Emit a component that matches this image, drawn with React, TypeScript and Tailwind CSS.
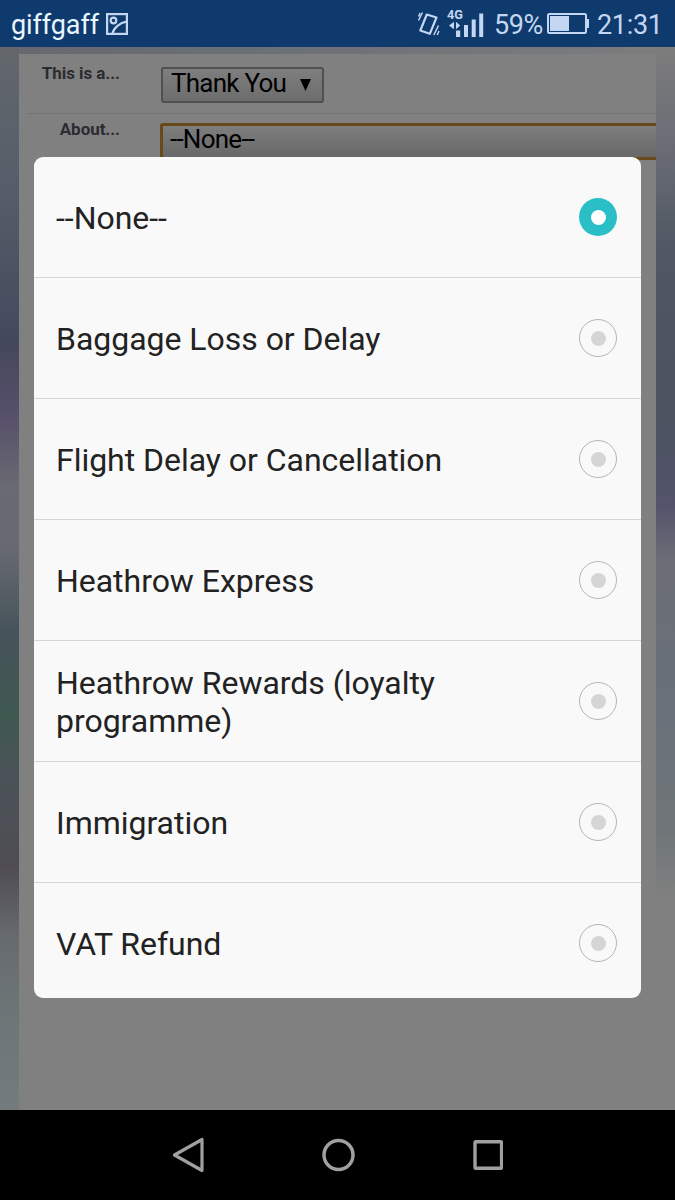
import React, { useState } from 'react';

const OPTIONS = [
  '--None--',
  'Baggage Loss or Delay',
  'Flight Delay or Cancellation',
  'Heathrow Express',
  'Heathrow Rewards (loyalty programme)',
  'Immigration',
  'VAT Refund',
];

const StatusBar: React.FC = () => (
  <header className="flex h-[47px] shrink-0 items-center bg-[#0f3a6d] pl-[11px] pr-[12px] text-[#c3d6f2]">
    <span className="w-[95px] whitespace-nowrap pt-[3px] text-[27px] leading-[44px] tracking-[-0.1px] text-[#e9f6ff]">giffgaff</span>
    <svg className="h-[22px] w-[22px]" viewBox="0 0 22 22" fill="none" stroke="currentColor" strokeWidth="2.2">
      <rect x="1.1" y="1.1" width="19.8" height="19.8" />
      <circle cx="7.5" cy="7.5" r="2.8" />
      <path d="M6.5 20.5C7.5 15 14 9.5 20.5 8.7" />
    </svg>
    <div className="ml-auto flex items-center">
      {/* vibrate */}
      <svg className="h-[26px] w-[22px]" viewBox="0 0 22 26" fill="none" stroke="currentColor">
        <path d="M8.8 3.5L18.5 6.5L11.8 22.8L2.3 19.5Z" strokeWidth="2.2" strokeLinejoin="round" />
        <path d="M0.5 9.5L4.5 1.5M0.5 5.5L2.2 2M15.8 24L20.5 14.5M19.2 24L21 20" strokeWidth="1.5" />
      </svg>
      {/* 4G signal */}
      <svg className="ml-[6px] h-[34px] w-[39px]" viewBox="-1 -3 39 34" fill="currentColor">
        <text x="0" y="9.3" fontSize="12.5" fontWeight="700" textLength="16" lengthAdjust="spacingAndGlyphs">4G</text>
        <path d="M2 15.5L7 11.8V19.2ZM13.2 15.5L9 11.8V19.2Z" />
        <rect x="9" y="20.5" width="4.2" height="6.5" />
        <rect x="17" y="15" width="4" height="12" />
        <rect x="24.7" y="9.5" width="4" height="17.5" />
        <rect x="32.2" y="3.5" width="4" height="23.5" />
      </svg>
      <span className="ml-[9px] w-[53px] whitespace-nowrap pt-[4px] text-[27px] tracking-[-0.4px]">59%</span>
      <svg className="h-[22px] w-[42px]" viewBox="0 0 42 22" fill="none" stroke="currentColor">
        <rect x="1" y="1" width="38" height="19" rx="1.5" strokeWidth="2" />
        <rect x="3" y="3" width="19" height="15" fill="currentColor" stroke="none" />
        <path d="M41 6V15" strokeWidth="2.4" />
      </svg>
      <span className="ml-[8px] w-[66px] whitespace-nowrap pt-[4px] text-[27px] tracking-[-0.3px]">21:31</span>
    </div>
  </header>
);

const FeedbackForm: React.FC = () => (
  <div className="flex h-full bg-[linear-gradient(90deg,#65696e,#6b7077_40%,#7d7d7d)] text-[#2b2b30]">
    <div className="w-[19px] bg-[linear-gradient(180deg,#63676c_0px,#555e69_140px,#44485c_296px,#56506a_368px,#6a6a72_441px,#666a70_503px,#46535a_585px,#3f5850_671px,#4a5458_723px,#4f4c54_819px,#666a6e_888px,#6c7476_957px,#737b7e_1063px)]" />
    <div className="mt-[7px] w-[637px] overflow-hidden bg-[#808080]">
      <div className="ml-2 flex h-[60px] border-b border-[#757575]">
        <div className="w-[93px] shrink-0 pt-[8px] text-right text-[17px] font-bold leading-[22px] tracking-[-0.05px]">This is a...</div>
        <div className="ml-[41px] mt-[13px] flex h-[36px] w-[163px] items-center rounded-[3px] border-2 border-[#505050] bg-linear-to-b from-[#7e7e7e] to-[#6d6d6d] pl-[8px] text-[26px] tracking-[-0.75px] text-black">
          <span className="-mt-[4px] w-[115px] shrink-0 whitespace-nowrap">Thank You</span>
          <svg className="ml-[14px] h-[12px] w-[11px] shrink-0" viewBox="0 0 11 12">
            <path d="M0 0H11L5.5 12Z" />
          </svg>
        </div>
      </div>
      <div className="ml-2 flex h-[50px]">
        <div className="w-[93px] shrink-0 pt-[4px] text-right text-[17px] font-bold leading-[22px] tracking-[-0.05px]">About...</div>
        <div className="ml-[40px] mt-[9px] flex h-[37px] w-[530px] shrink-0 items-center rounded-l-[3px] border-[3px] border-[#674a19] bg-linear-to-b from-[#7e7e7e] to-[#686868] pl-[7px] text-[26px] tracking-[-0.75px] text-black">
          <span className="-mt-[5px]">--None--</span>
        </div>
      </div>
    </div>
    <div className="w-[19px] bg-[linear-gradient(180deg,#7d7d7d_0px,#6b6d76_96px,#505863_199px,#4b5260_378px,#54546c_461px,#6c6e76_516px,#68707a_654px,#707678_785px,#808080_853px)]" />
  </div>
);

const Radio: React.FC<{ checked: boolean }> = ({ checked }) => (
  <span
    className={`flex h-[38px] w-[38px] shrink-0 items-center justify-center rounded-full ${
      checked ? 'bg-[#2abfc7]' : 'border border-[#b5b5b5]'
    }`}
  >
    <span className={`h-[15px] w-[15px] rounded-full ${checked ? 'bg-white' : 'bg-[#d5d5d5]'}`} />
  </span>
);

const App: React.FC = () => {
  const [selected, setSelected] = useState(OPTIONS[0]);

  return (
    <div className="flex h-[1200px] w-[675px] flex-col overflow-hidden font-['Roboto',sans-serif]">
      <StatusBar />
      <main className="relative h-[1063px] shrink-0">
        <FeedbackForm />
        {/* Option picker dialog */}
        <div className="absolute left-[34px] top-[110px] h-[841px] w-[607px] overflow-hidden rounded-[9px] bg-[#f9f9f9]">
          {OPTIONS.map((option) => (
            <button
              key={option}
              onClick={() => setSelected(option)}
              className="flex h-[121px] w-full items-center justify-between border-b border-[#d6d6d6] pl-[22px] pr-[24px] text-left text-[32px] leading-[38px] tracking-[-0.03px] text-[#222222]"
            >
              <span className="w-[440px] pt-[2px]">{option}</span>
              <Radio checked={option === selected} />
            </button>
          ))}
        </div>
      </main>
      <nav className="flex h-[90px] shrink-0 items-center bg-black pl-[172px] text-[#a0a0a0]">
        <svg className="h-[36px] w-[34px]" viewBox="0 0 34 36" fill="none" stroke="currentColor" strokeWidth="3.2" strokeLinejoin="round">
          <path d="M2.5 18L30 2.5V33.5Z" />
        </svg>
        <svg className="ml-[115px] h-[34px] w-[34px]" viewBox="0 0 34 34" fill="none" stroke="currentColor" strokeWidth="3.5">
          <circle cx="17.5" cy="17" r="14.5" />
        </svg>
        <svg className="ml-[118px] h-[30px] w-[30px]" viewBox="0 0 30 30" fill="none" stroke="currentColor" strokeWidth="3.4">
          <rect x="2" y="1.7" width="26.6" height="26.6" rx="1" />
        </svg>
      </nav>
    </div>
  );
};

export default App;
